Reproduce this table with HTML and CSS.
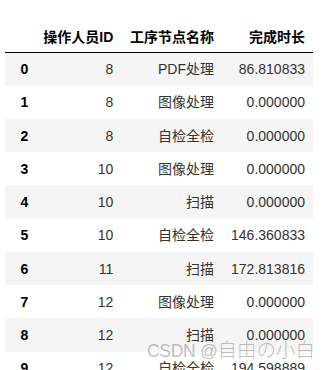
FILE: index.html
```html
<!DOCTYPE html>
<html>
<head>
<meta charset="utf-8">
<link rel="stylesheet" href="styles.css">
</head>
<body>
<div class="page">
  <table class="df">
    <colgroup>
      <col class="c0"><col class="c1"><col class="c2"><col class="c3">
    </colgroup>
    <thead>
      <tr><th></th><th>操作人员ID</th><th>工序节点名称</th><th>完成时长</th></tr>
    </thead>
    <tbody>
      <tr><th>0</th><td>8</td><td>PDF处理</td><td>86.810833</td></tr>
      <tr><th>1</th><td>8</td><td>图像处理</td><td>0.000000</td></tr>
      <tr><th>2</th><td>8</td><td>自检全检</td><td>0.000000</td></tr>
      <tr><th>3</th><td>10</td><td>图像处理</td><td>0.000000</td></tr>
      <tr><th>4</th><td>10</td><td>扫描</td><td>0.000000</td></tr>
      <tr><th>5</th><td>10</td><td>自检全检</td><td>146.360833</td></tr>
      <tr><th>6</th><td>11</td><td>扫描</td><td>172.813816</td></tr>
      <tr><th>7</th><td>12</td><td>图像处理</td><td>0.000000</td></tr>
      <tr><th>8</th><td>12</td><td>扫描</td><td>0.000000</td></tr>
      <tr><th>9</th><td>12</td><td>自检全检</td><td>194.598889</td></tr>
    </tbody>
  </table>
  <div class="watermark"><span class="wm-latin">CSDN @</span>自由の小白</div>
</div>
</body>
</html>
```

FILE: styles.css
```css
html, body {
  margin: 0;
  padding: 0;
  background: #fff;
}
.page {
  position: relative;
  width: 325px;
  height: 370px;
  overflow: hidden;
  font-family: "Liberation Sans", Arial, "Noto Sans CJK SC", sans-serif;
  font-size: 14px;
  color: #000;
}
.df {
  border-collapse: collapse;
  border-spacing: 0;
  table-layout: fixed;
  width: 307.5px;
  margin: 21.7px 0 0 5px;
}
.c0 { width: 30.8px; }
.c1 { width: 85px; }
.c2 { width: 100.7px; }
.c3 { width: 91px; }
.df th, .df td {
  text-align: right;
  vertical-align: middle;
  line-height: 16px;
  white-space: nowrap;
  padding: 0 7.5px;
}
.df thead th {
  font-weight: bold;
  color: #000;
  padding-top: 7px;
  padding-bottom: 7.3px;
  vertical-align: bottom;
  border-bottom: 1px solid #000;
}
.df tbody tr {
  height: 33.25px;
}
.df tbody th {
  font-weight: bold;
  color: #000;
}
.df tbody td {
  color: #333;
}
.df tbody tr:nth-child(odd) {
  background: #f5f5f5;
}
.watermark {
  position: absolute;
  left: 147px;
  top: 339px;
  font-size: 19.5px;
  line-height: 22px;
  color: rgba(150, 150, 150, 0.6);
  white-space: nowrap;
  font-family: "Liberation Sans", Arial, "Noto Sans CJK JP", sans-serif;
  font-weight: 300;
}
.wm-latin {
  font-size: 17.5px;
  letter-spacing: -0.3px;
}
```
